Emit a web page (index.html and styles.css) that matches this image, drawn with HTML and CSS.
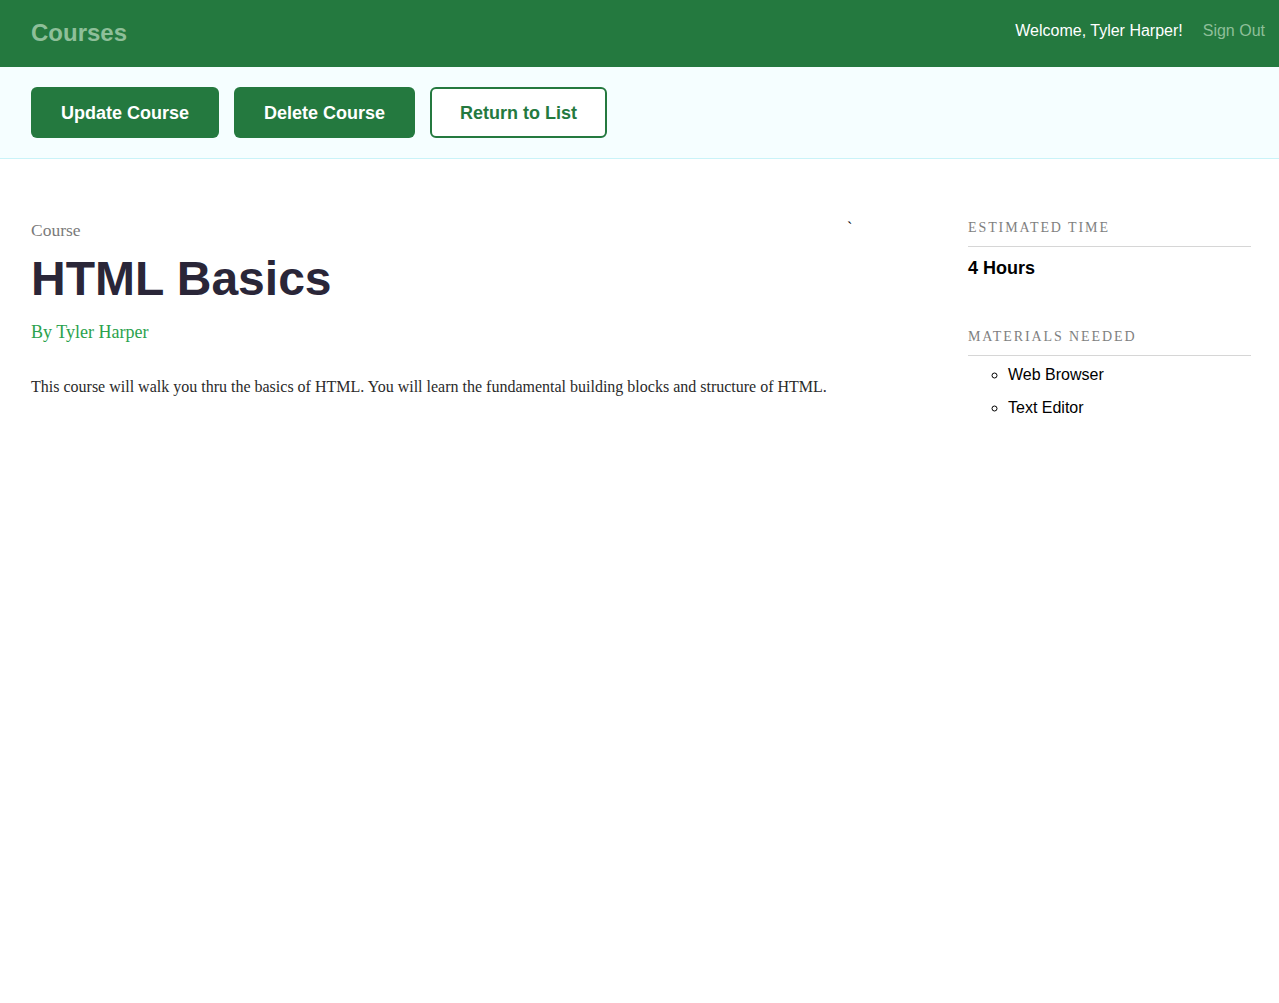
FILE: index.html
```html
<!DOCTYPE html>
<html lang="en">
<head>
<meta charset="utf-8">
<title>Courses</title>
<link rel="stylesheet" href="styles.css">
</head>
<body>
<header class="header">
  <h1 class="logo">Courses</h1>
  <nav class="user-nav">
    <span class="welcome">Welcome, Tyler Harper!</span>
    <a class="signout" href="#">Sign Out</a>
  </nav>
</header>
<div class="actions">
  <a class="btn btn-primary" href="#">Update Course</a>
  <a class="btn btn-primary" href="#">Delete Course</a>
  <a class="btn btn-secondary" href="#">Return to List</a>
</div>
<main class="detail">
  <section class="main-col">
    <span class="tick">`</span>
    <h4 class="course-label">Course</h4>
    <h3 class="course-title">HTML Basics</h3>
    <p class="author">By Tyler Harper</p>
    <p class="desc">This course will walk you thru the basics of HTML. You will learn the fundamental building blocks and structure of HTML.</p>
  </section>
  <aside class="side-col">
    <div class="stat">
      <h4 class="stat-label">Estimated Time</h4>
      <h3 class="stat-value">4 Hours</h3>
    </div>
    <div class="stat">
      <h4 class="stat-label">Materials Needed</h4>
      <ul class="materials">
        <li>Web Browser</li>
        <li>Text Editor</li>
      </ul>
    </div>
  </aside>
</main>
</body>
</html>
```
FILE: styles.css
```css
* { box-sizing: border-box; }
body {
  margin: 0;
  font-family: "Liberation Sans", Arial, sans-serif;
  background: #fff;
}
.header {
  height: 67px;
  background: #24793f;
  display: flex;
  align-items: center;
  justify-content: space-between;
  padding: 0 14px 0 31px;
}
.logo {
  margin: -2px 0 0;
  font-size: 24px;
  font-weight: bold;
  color: #8ebf99;
}
.user-nav {
  display: flex;
  align-items: center;
  gap: 20px;
  font-size: 16px;
  margin-top: -6px;
}
.welcome { color: #fff; }
.signout { color: #8ebf99; text-decoration: none; }
.actions {
  background: #f5feff;
  border-bottom: 1px solid #c9f3f8;
  padding: 20px 31px 20px;
  display: flex;
  gap: 15px;
}
.btn {
  display: inline-block;
  font-size: 18px;
  font-weight: bold;
  line-height: 21px;
  padding: 16px 30px 14px;
  border-radius: 6px;
  text-decoration: none;
}
.btn-primary { background: #24793f; color: #fff; }
.btn-secondary {
  background: #fff;
  color: #24793f;
  border: 2px solid #24793f;
  padding: 14px 28px 12px;
}
.detail {
  display: grid;
  grid-template-columns: 1fr 283px;
  column-gap: 60px;
  padding: 61px 28px 0 31px;
}
.main-col { position: relative; }
.tick {
  position: absolute;
  left: 816px;
  top: -1px;
  font-family: "Liberation Serif", serif;
  font-size: 16px;
}
.course-label {
  margin: 0;
  font-family: "Liberation Serif", "Times New Roman", serif;
  font-weight: normal;
  font-size: 17.5px;
  color: #7a7a7a;
}
.course-title {
  margin: 12px 0 0;
  font-size: 48px;
  font-weight: bold;
  color: #2a2638;
  line-height: 1.1;
}
.author {
  margin: 16px 0 0;
  font-family: "Liberation Serif", "Times New Roman", serif;
  font-size: 18px;
  color: #2ba24d;
}
.desc {
  margin: 35px 0 0;
  font-family: "Liberation Serif", "Times New Roman", serif;
  font-size: 16px;
  color: #2a2a2a;
}
.side-col { margin-top: 0; }
.stat { margin-bottom: 50px; }
.stat-label {
  margin: 0;
  padding-bottom: 10px;
  border-bottom: 1px solid #d6d6d6;
  font-family: "Liberation Serif", "Times New Roman", serif;
  font-weight: normal;
  font-size: 14px;
  letter-spacing: 1.9px;
  text-transform: uppercase;
  color: #7f7f7f;
}
.stat-value {
  margin: 11px 0 0;
  font-size: 18px;
  font-weight: bold;
  color: #000;
}
.materials {
  margin: 10px 0 0;
  padding-left: 40px;
  list-style: circle;
  font-size: 16px;
  color: #000;
}
.materials li { line-height: 18px; margin-bottom: 15px; }
```
